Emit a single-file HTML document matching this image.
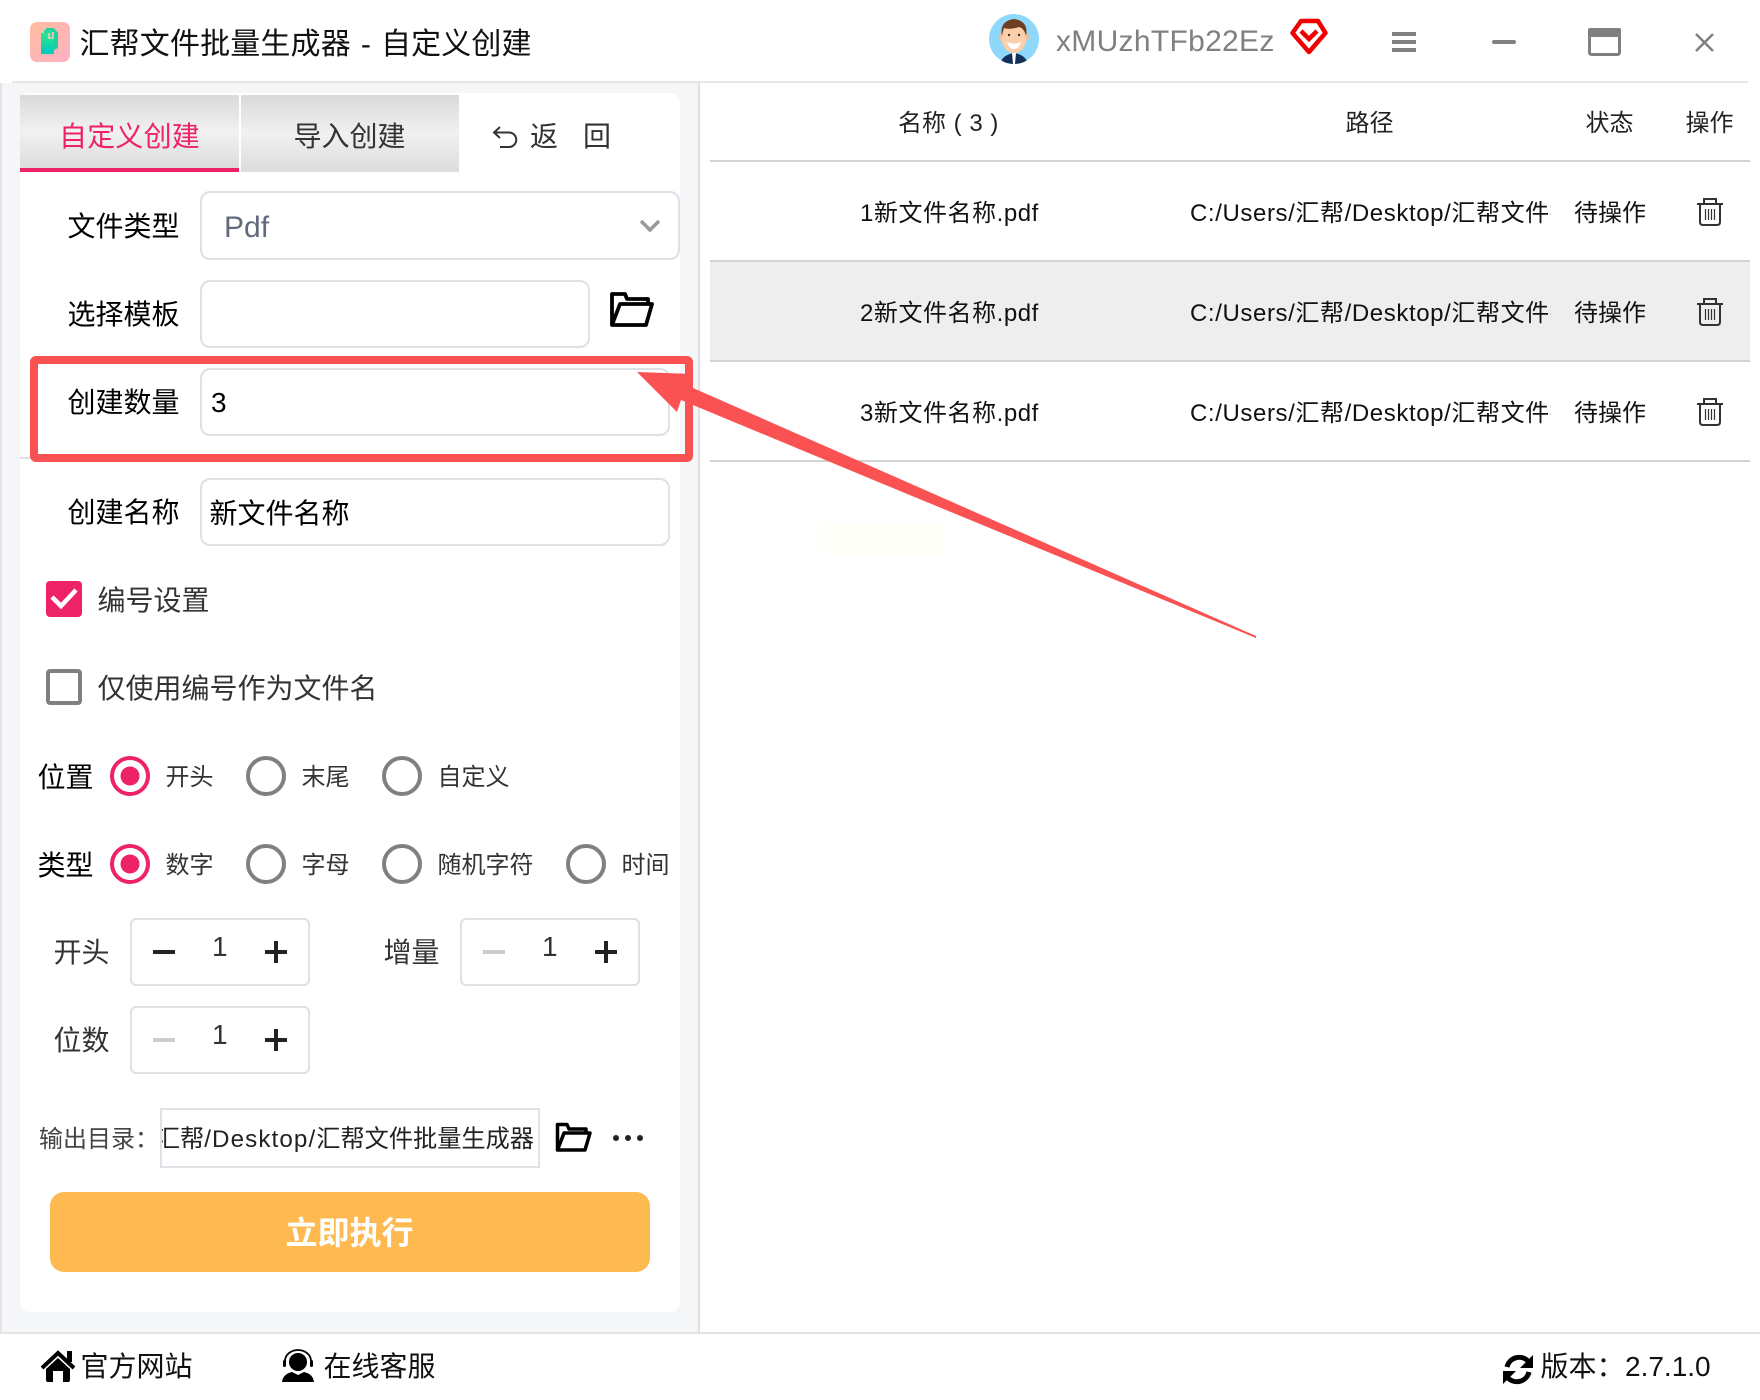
<!DOCTYPE html>
<html lang="zh">
<head>
<meta charset="utf-8">
<title>汇帮文件批量生成器</title>
<style>
html,body{margin:0;padding:0;background:#fff}
body{width:1760px;height:1400px;position:relative;overflow:hidden;font-family:"Liberation Sans","Noto Sans CJK SC",sans-serif;color:#000}
.b{position:absolute;box-sizing:border-box}
.t{position:absolute;white-space:nowrap;height:40px;line-height:40px;font-size:28px;margin-top:1px}
.i{position:absolute;box-sizing:border-box;border:2px solid #dfe0e6;border-radius:10px;background:#fff}
.s{font-size:24px;color:#333}
.h{font-size:24px;color:#222}
.r{font-size:24px;color:#111}
.p{letter-spacing:.6px}
.in{margin-top:0}
</style>
</head>
<body>
<!-- structure -->
<div class="b" style="left:12px;top:81px;width:1736px;height:2px;background:#e6e6e6"></div>
<div class="b" style="left:0;top:83px;width:700px;height:1251px;background:#f5f6f8;border-right:2px solid #e0e0e4;border-left:2px solid #e4e4e8"></div>
<div class="b" style="left:20px;top:93px;width:660px;height:1219px;background:#fff;border-radius:10px"></div>
<div class="b" style="left:0;top:1332px;width:1760px;height:2px;background:#e4e4e6"></div>

<!-- tabs -->
<div class="b" style="left:20px;top:95px;width:219px;height:77px;background:linear-gradient(#d9d9d9,#f1f1f1 50%,#dcdcdc);border-bottom:4px solid #ee2266"></div>
<div class="b" style="left:241px;top:95px;width:218px;height:77px;background:linear-gradient(#d9d9d9,#f1f1f1 50%,#dcdcdc)"></div>
<div class="t" style="left:59px;top:116px;color:#ee2266;letter-spacing:.2px">自定义创建</div>
<div class="t" style="left:293.500px;top:116px;color:#333">导入创建</div>
<div class="t" style="left:530px;top:116px;color:#333">返</div>
<div class="t" style="left:583px;top:116px;color:#333">回</div>

<!-- form -->
<div class="t" style="left:67.500px;top:206px">文件类型</div>
<div class="i" style="left:200px;top:191px;width:480px;height:69px"></div>
<div class="t" style="left:224px;top:207px;font-size:30px;color:#606a7c">Pdf</div>

<div class="t" style="left:67.500px;top:294px">选择模板</div>
<div class="i" style="left:200px;top:280px;width:390px;height:68px"></div>

<div class="b" style="left:20px;top:457px;width:12px;height:2px;background:#e2e2e6"></div>
<div class="t" style="left:67.500px;top:382px">创建数量</div>
<div class="i" style="left:200px;top:368px;width:470px;height:68px"></div>
<div class="t" style="left:211px;top:382px">3</div>

<div class="t" style="left:67.500px;top:492px">创建名称</div>
<div class="i" style="left:200px;top:478px;width:470px;height:68px"></div>
<div class="t" style="left:209.500px;top:493px">新文件名称</div>

<div class="b" style="left:46px;top:581px;width:36px;height:36px;background:#ee2266;border-radius:4px"></div>
<div class="t" style="left:97.500px;top:580px;color:#333">编号设置</div>
<div class="b" style="left:46px;top:669px;width:36px;height:36px;border:4px solid #808080;border-radius:4px"></div>
<div class="t" style="left:97.500px;top:668px;color:#333">仅使用编号作为文件名</div>

<div class="t" style="left:37.500px;top:757px">位置</div>
<div class="t s" style="left:165.500px;top:757px">开头</div>
<div class="t s" style="left:301.500px;top:757px">末尾</div>
<div class="t s" style="left:437.500px;top:757px">自定义</div>

<div class="t" style="left:37.500px;top:845px">类型</div>
<div class="t s" style="left:165.500px;top:845px">数字</div>
<div class="t s" style="left:301.500px;top:845px">字母</div>
<div class="t s" style="left:437.500px;top:845px">随机字符</div>
<div class="t s" style="left:621.500px;top:845px">时间</div>

<div class="t" style="left:53.500px;top:932px;color:#333">开头</div>
<div class="i" style="left:130px;top:918px;width:180px;height:68px;border-radius:6px"></div>
<div class="t" style="left:212px;top:926px;color:#333">1</div>
<div class="t" style="left:383.500px;top:932px;color:#333">增量</div>
<div class="i" style="left:460px;top:918px;width:180px;height:68px;border-radius:6px"></div>
<div class="t" style="left:542px;top:926px;color:#333">1</div>
<div class="t" style="left:53.500px;top:1020px;color:#333">位数</div>
<div class="i" style="left:130px;top:1006px;width:180px;height:68px;border-radius:6px"></div>
<div class="t" style="left:212px;top:1014px;color:#333">1</div>

<div class="t s" style="left:39px;top:1119px;color:#444">输出目录：</div>
<div class="b" style="left:160px;top:1108px;width:380px;height:60px;border:2px solid #e0e0e6;background:#fff;overflow:hidden">
  <div class="t in" style="right:4px;top:10px;font-size:24.200px;color:#222">C:/Users/汇帮<span style="letter-spacing:1.1px">/Desktop/</span>汇帮文件批量生成器</div>
</div>

<div class="b" style="left:50px;top:1192px;width:600px;height:80px;background:#ffb951;border-radius:14px"></div>
<div class="t" style="left:285.500px;top:1212px;font-size:32px;font-weight:700;color:#fff">立即执行</div>

<!-- titlebar -->
<div class="t" style="left:79.500px;top:24px;font-size:30px;color:#111;letter-spacing:.15px;word-spacing:1.500px">汇帮文件批量生成器 - 自定义创建</div>
<div class="t" style="left:1056px;top:21px;font-size:30px;color:#808080;letter-spacing:.3px">xMUzhTFb22Ez</div>

<!-- table -->
<div class="b" style="left:710px;top:261px;width:1040px;height:100px;background:#eee"></div>
<div class="b" style="left:710px;top:160px;width:1040px;height:2px;background:#d3d3d3"></div>
<div class="b" style="left:710px;top:260px;width:1040px;height:2px;background:#d3d3d3"></div>
<div class="b" style="left:710px;top:360px;width:1040px;height:2px;background:#d3d3d3"></div>
<div class="b" style="left:710px;top:460px;width:1040px;height:2px;background:#d3d3d3"></div>
<div class="b" style="left:820px;top:523px;width:123px;height:32px;background:#fffffa"></div>

<div class="t h" style="left:898px;top:103px;word-spacing:1px">名称 ( 3 )</div>
<div class="t h" style="left:1345.500px;top:103px">路径</div>
<div class="t h" style="left:1585.500px;top:103px">状态</div>
<div class="t h" style="left:1685.500px;top:103px">操作</div>

<div class="t r" style="left:860px;top:193px;letter-spacing:.55px">1新文件名称.pdf</div>
<div class="b" style="left:1190px;top:193px;width:361px;height:40px;overflow:hidden"><div class="t r p in" style="left:0;top:1px">C:/Users/汇帮/Desktop/汇帮文件批量生成器</div></div>
<div class="t r" style="left:1574px;top:193px">待操作</div>

<div class="t r" style="left:860px;top:293px;letter-spacing:.55px">2新文件名称.pdf</div>
<div class="b" style="left:1190px;top:293px;width:361px;height:40px;overflow:hidden"><div class="t r p in" style="left:0;top:1px">C:/Users/汇帮/Desktop/汇帮文件批量生成器</div></div>
<div class="t r" style="left:1574px;top:293px">待操作</div>

<div class="t r" style="left:860px;top:393px;letter-spacing:.55px">3新文件名称.pdf</div>
<div class="b" style="left:1190px;top:393px;width:361px;height:40px;overflow:hidden"><div class="t r p in" style="left:0;top:1px">C:/Users/汇帮/Desktop/汇帮文件批量生成器</div></div>
<div class="t r" style="left:1574px;top:393px">待操作</div>

<!-- footer -->
<div class="t" style="left:80.500px;top:1346px;color:#111">官方网站</div>
<div class="t" style="left:323.500px;top:1346px;color:#111">在线客服</div>
<div class="t" style="left:1540.500px;top:1346px;color:#111">版本：</div>
<div class="t" style="left:1625px;top:1346px;color:#111">2.7.1.0</div>

<!-- icons overlay -->
<svg width="1760" height="1400" viewBox="0 0 1760 1400" style="position:absolute;left:0;top:0" xmlns="http://www.w3.org/2000/svg">
  <defs>
    <linearGradient id="ai" x1="0" y1="0" x2="1" y2="1"><stop offset="0" stop-color="#ffbda0"/><stop offset="1" stop-color="#ffb0c4"/></linearGradient>
    <linearGradient id="ad" x1="0" y1="0" x2="0" y2="1"><stop offset="0" stop-color="#2be88e"/><stop offset="1" stop-color="#00c8c0"/></linearGradient>
    <clipPath id="av"><circle cx="1014" cy="39" r="25"/></clipPath>
    <g id="trash" fill="none" stroke="#333" stroke-width="2">
      <path d="M1697 204H1723"/>
      <path d="M1704 204V199H1716V204"/>
      <path d="M1700 204V222Q1700 225 1703 225H1717Q1720 225 1720 222V204"/>
      <path stroke-width="1.2" d="M1705.500 209V220M1708.500 209V220M1711.500 209V220M1714.500 209V220"/>
    </g>
    <g id="radio-on"><circle r="18" fill="#fff" stroke="#ee2266" stroke-width="4"/><circle r="9.5" fill="#ee2266"/></g>
    <circle id="radio-off" r="18" fill="#fff" stroke="#808080" stroke-width="4"/>
    <g id="minus"><rect x="-11" y="-2" width="22" height="4"/></g>
    <g id="plus"><rect x="-11" y="-2" width="22" height="4"/><rect x="-2" y="-11" width="4" height="22"/></g>
  </defs>

  <!-- app icon -->
  <rect x="30" y="22" width="40" height="40" rx="7" fill="url(#ai)"/>
  <path d="M46 28H54L58 33V48L54 50V32H46Z" fill="#1ed0a0"/>
  <path d="M44 30H52V49H44Z" fill="#22dc98"/>
  <path d="M41 33H49L54 38V54H41Z" fill="url(#ad)"/>
  <path d="M49 33V38H54" fill="none" stroke="#ffc8b8" stroke-width="1.5"/>

  <!-- avatar -->
  <g clip-path="url(#av)">
    <rect x="985" y="10" width="60" height="60" fill="#8fd8fb"/>
    <path d="M1000 64Q1002 55 1014 53Q1026 55 1028 64Z" fill="#12305a"/>
    <path d="M1012 53H1016L1015 64H1013Z" fill="#fff"/>
    <ellipse cx="1002" cy="37" rx="3" ry="4" fill="#f5bd98"/>
    <ellipse cx="1026" cy="37" rx="3" ry="4" fill="#f5bd98"/>
    <ellipse cx="1014" cy="38" rx="12.5" ry="15" fill="#fbcfac"/>
    <path d="M1002 36Q999 21 1014 19Q1029 21 1026 36Q1024 28 1019 27Q1010 30 1004 28Q1003 31 1002 36Z" fill="#6e3d22"/>
    <path d="M1007 42Q1014 45 1021 42Q1019 49 1014 49Q1009 49 1007 42Z" fill="#fff"/>
    <circle cx="1009" cy="35" r="1.2" fill="#333"/><circle cx="1019" cy="35" r="1.2" fill="#333"/>
  </g>

  <!-- vip -->
  <path d="M1301 21H1318L1325.500 33L1309 52L1292.500 33Z" fill="none" stroke="#f00000" stroke-width="4.500" stroke-linejoin="round"/>
  <path d="M1301 31L1309 39L1317 31" fill="none" stroke="#f00000" stroke-width="4.500"/>

  <!-- window controls -->
  <rect x="1392" y="32" width="24" height="4" fill="#808080"/>
  <rect x="1392" y="40" width="24" height="4" fill="#808080"/>
  <rect x="1392" y="48" width="24" height="4" fill="#808080"/>
  <rect x="1492" y="40" width="24" height="4" rx="2" fill="#808080"/>
  <rect x="1589.500" y="29.500" width="30" height="25" rx="2" fill="#fff" stroke="#808080" stroke-width="3"/>
  <rect x="1588" y="28" width="33" height="9" rx="2" fill="#808080"/>
  <path d="M1696 34L1713 51M1713 34L1696 51" stroke="#808080" stroke-width="2.500" fill="none"/>

  <!-- return arrow -->
  <path d="M500 127L494 132.500L500 138M494 132.500H509A7.200 7.200 0 0 1 509 147H500" fill="none" stroke="#333" stroke-width="2"/>

  <!-- chevron -->
  <path d="M641 221L650 230L659 221" fill="none" stroke="#999" stroke-width="3.500"/>

  <!-- folder -->
  <g fill="none" stroke="#000" stroke-width="3.800" stroke-linejoin="round">
    <path d="M612 325V294H625L627 299H648V304"/>
    <path d="M620 304H652L646 325H612Z" fill="#fff"/>
  </g>
  <g fill="none" stroke="#000" stroke-width="3.500" stroke-linejoin="round">
    <path d="M557.500 1150V1124.500H567L569 1129H586V1133"/>
    <path d="M564 1133H590L585 1150H557.500Z" fill="#fff"/>
  </g>
  <circle cx="616" cy="1138" r="3" fill="#222"/><circle cx="628" cy="1138" r="3" fill="#222"/><circle cx="640" cy="1138" r="3" fill="#222"/>

  <!-- checkbox tick -->
  <path d="M52 597L61 606L76 590" fill="none" stroke="#fff" stroke-width="4.500"/>

  <!-- radios -->
  <use href="#radio-on" x="130" y="776"/>
  <use href="#radio-off" x="266" y="776"/>
  <use href="#radio-off" x="402" y="776"/>
  <use href="#radio-on" x="130" y="864"/>
  <use href="#radio-off" x="266" y="864"/>
  <use href="#radio-off" x="402" y="864"/>
  <use href="#radio-off" x="586" y="864"/>

  <!-- steppers -->
  <use href="#minus" x="164" y="952" fill="#222"/>
  <use href="#plus" x="276" y="952" fill="#222"/>
  <use href="#minus" x="494" y="952" fill="#ccc"/>
  <use href="#plus" x="606" y="952" fill="#222"/>
  <use href="#minus" x="164" y="1040" fill="#ccc"/>
  <use href="#plus" x="276" y="1040" fill="#222"/>

  <!-- trash -->
  <use href="#trash"/>
  <use href="#trash" y="100"/>
  <use href="#trash" y="200"/>

  <!-- footer icons -->
  <path d="M42 1368L58 1353L74 1368" fill="none" stroke="#000" stroke-width="4"/>
  <rect x="67" y="1351" width="5" height="11" fill="#000"/>
  <path d="M46 1369L58 1358L70 1369V1380Q70 1382 68 1382H63V1371H53V1382H48Q46 1382 46 1380Z" fill="#000"/>
  <circle cx="298" cy="1362" r="9" fill="#000"/>
  <path d="M285 1364V1361A13 11 0 0 1 311 1361V1364" fill="none" stroke="#000" stroke-width="1.800"/>
  <rect x="283" y="1360" width="3" height="7" rx="1.500" fill="#000"/>
  <rect x="310" y="1360" width="3" height="7" rx="1.500" fill="#000"/>
  <path d="M282 1382Q283 1374 292 1372L298 1375L304 1372Q313 1374 314 1382Z" fill="#000"/>
  <g fill="none" stroke="#000" stroke-width="5">
    <path d="M1507 1367A12.500 12.500 0 0 1 1528 1361"/>
    <path d="M1529 1372A12.500 12.500 0 0 1 1508 1378"/>
  </g>
  <path d="M1533 1355V1368H1520Z" fill="#000"/>
  <path d="M1503 1384V1371H1516Z" fill="#000"/>

  <!-- annotation -->
  <rect x="34" y="360" width="655" height="98" rx="2" fill="none" stroke="#fa5252" stroke-width="8"/>
  <path d="M637 372L693 374V388L900 479L1256 636V638L900 491L681 400L677 412Z" fill="#fa5252"/>
</svg>
</body>
</html>
